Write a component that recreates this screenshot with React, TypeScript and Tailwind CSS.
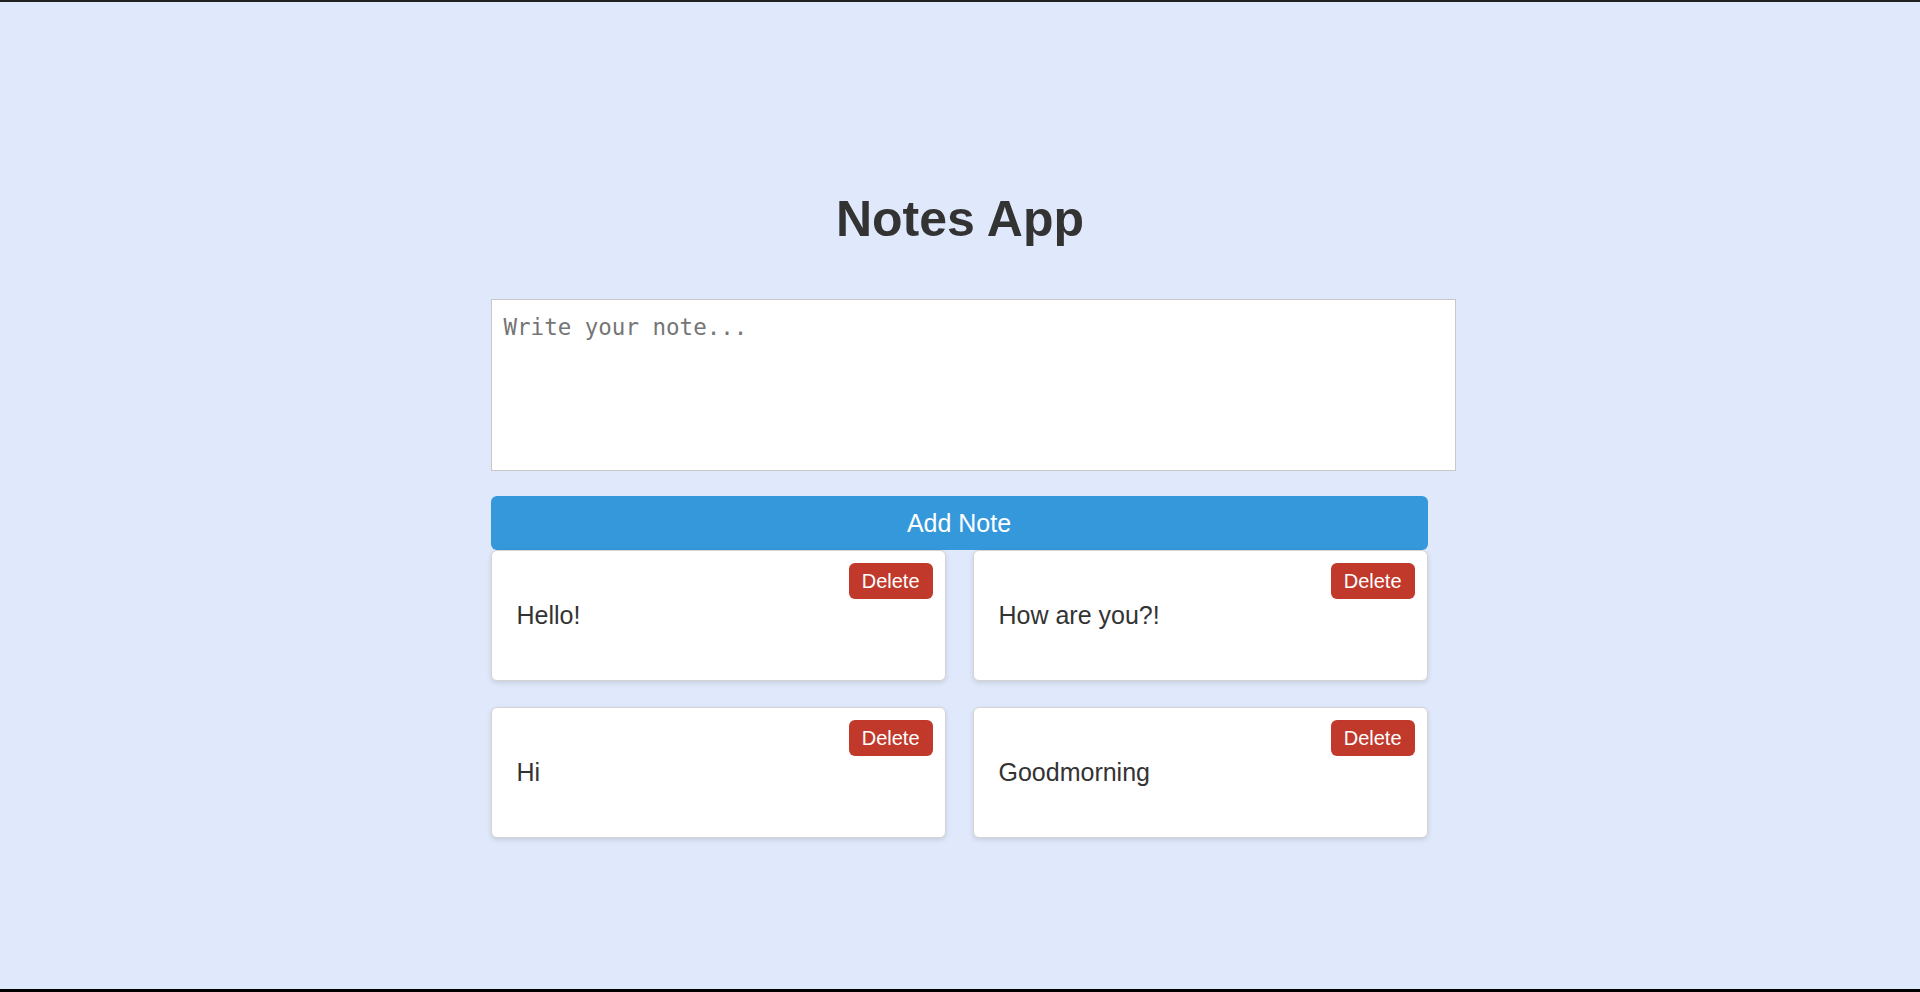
import { useState } from 'react';

type Note = { id: number; text: string };

const initialNotes: Note[] = [
  { id: 1, text: 'Hello!' },
  { id: 2, text: 'How are you?!' },
  { id: 3, text: 'Hi' },
  { id: 4, text: 'Goodmorning' },
];

export default function App() {
  const [notes, setNotes] = useState<Note[]>(initialNotes);
  const [draft, setDraft] = useState('');

  const addNote = () => {
    if (!draft.trim()) return;
    setNotes([...notes, { id: Date.now(), text: draft.trim() }]);
    setDraft('');
  };

  return (
    <div className="h-screen overflow-hidden bg-[#e0e9fb] border-t-2 border-b-[3px] border-t-[#222] border-b-black font-['Liberation_Sans',Arial,sans-serif] text-[#333]">
      <h1 className="pt-[189px] text-center text-[50px] leading-[57px] font-bold text-[#333] mb-[51px]">Notes App</h1>

      <div className="w-[937px] mx-auto -translate-x-px">
        <textarea
          value={draft}
          onChange={(e) => setDraft(e.target.value)}
          placeholder="Write your note..."
          className="block w-[965px] h-[172px] bg-white border border-[#c8c8c8] px-[12px] pt-[14px] pb-[10px] font-['DejaVu_Sans_Mono',monospace] text-[22.5px] leading-[26px] text-[#333] placeholder:text-[#757575] resize-none outline-none"
        />

        <button
          onClick={addNote}
          className="mt-[25px] block w-full h-[54px] rounded-[6px] bg-[#3498db] text-white text-[25px] leading-[28px]"
        >
          Add Note
        </button>

        <div className="grid grid-cols-2 gap-x-[27px] gap-y-[26px]">
          {notes.map((note) => (
            <div
              key={note.id}
              className="relative bg-white border border-[#d4d4d4] rounded-[6px] shadow-[0_2px_5px_rgba(0,0,0,0.12)] p-[25px]"
            >
              <button
                onClick={() => setNotes(notes.filter((n) => n.id !== note.id))}
                className="absolute top-[12px] right-[12px] h-[36px] px-[13px] rounded-[6px] bg-[#c0392b] text-white text-[20px] leading-[23px]"
              >
                Delete
              </button>
              <p className="my-[25px] text-[25px] leading-[29px] text-[#333]">{note.text}</p>
            </div>
          ))}
        </div>
      </div>
    </div>
  );
}
